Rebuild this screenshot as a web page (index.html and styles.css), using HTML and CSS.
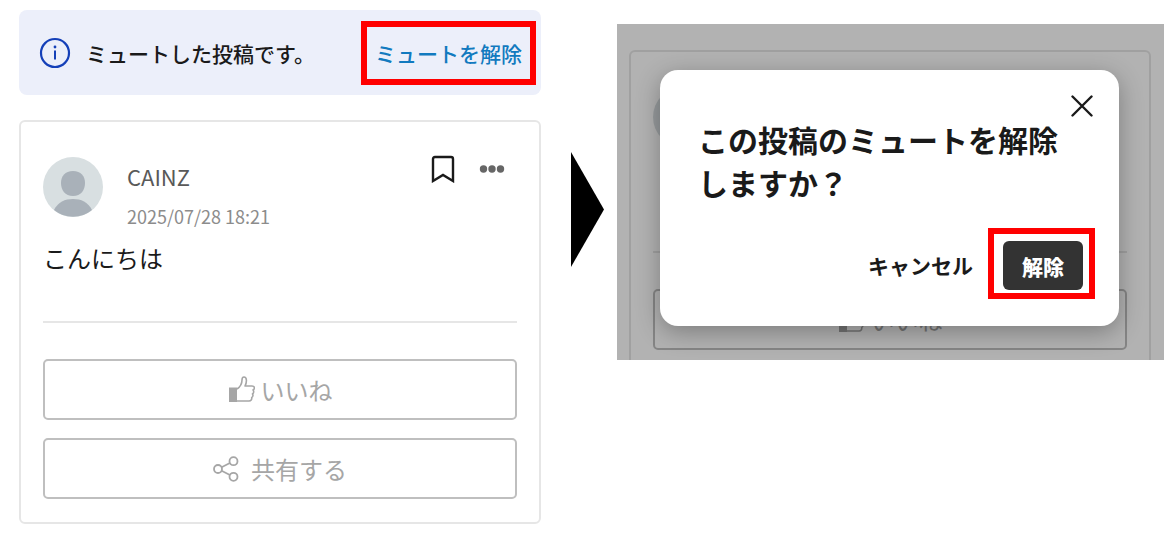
FILE: index.html
```html
<!DOCTYPE html>
<html lang="ja">
<head>
  <meta charset="UTF-8">
  <meta name="viewport" content="width=device-width, initial-scale=1.0">
  <title>ミュートを解除</title>
  <link rel="stylesheet" href="styles.css">
</head>
<body>

  <main class="steps">
    <section class="step-post">
      <div class="notice">
        <svg class="info-icon" viewBox="0 0 32 32" aria-hidden="true">
          <circle cx="16" cy="16" r="14" fill="none" stroke="#1540b8" stroke-width="2.200"/>
          <path d="M16 13.500v9" stroke="#1540b8" stroke-width="2"/>
          <circle cx="16" cy="10" r="1.400" fill="#1540b8"/>
        </svg>
        <p class="notice-text">ミュートした投稿です。</p>
        <div class="highlight">
          <a class="unmute" href="#dialog-title">ミュートを解除</a>
        </div>
      </div>

      <article class="card">
        <header class="card-head">
          <svg class="avatar" viewBox="0 0 60 60" aria-hidden="true">
            <circle cx="30" cy="30" r="30" fill="#d8dfe1"/>
            <path d="M30 14c8 0 12 5 12 12s-4 13-12 13-12-6-12-13 4-12 12-12z" fill="#a9b1b9"/>
            <path d="M11 53c4-8 11-11 19-11s15 3 19 11a30 30 0 0 1-38 0z" fill="#a9b1b9"/>
          </svg>
          <div class="meta">
            <span class="name">CAINZ</span>
            <time class="date" datetime="2025-07-28T18:21">2025/07/28 18:21</time>
          </div>
          <div class="tools">
            <button class="icon-button" type="button" aria-label="ブックマーク">
              <svg width="24" height="28" viewBox="0 0 24 28">
                <path d="M2 26V4q0-2 2-2h16q2 0 2 2v22l-10-6z" fill="none" stroke="#1a1a1a" stroke-width="2.400"/>
              </svg>
            </button>
            <button class="icon-button" type="button" aria-label="メニュー">
              <svg width="26" height="8" viewBox="0 0 26 8">
                <g fill="#666"><circle cx="4.500" cy="4" r="3.700"/><circle cx="13" cy="4" r="3.700"/><circle cx="21.500" cy="4" r="3.700"/></g>
              </svg>
            </button>
          </div>
        </header>
        <p class="body">こんにちは</p>
        <div class="actions">
          <button class="action" type="button">
            <svg width="27" height="27" viewBox="0 0 27 27" aria-hidden="true">
              <path d="M1 11.500h8V26H1z" fill="#a6a6a6"/>
              <path d="M9 13c3-2 5-5 5-9 0-2 .5-3 2-3 3 0 3 5 1 9h7c3 0 3 3 1 4 1 1 1 3-.5 4 .8 1 .5 3-.8 3.500.3 2-.7 3.500-2.700 3.500H9" fill="none" stroke="#a6a6a6" stroke-width="1.600" stroke-linejoin="round"/>
            </svg>
            いいね
          </button>
          <button class="action share" type="button">
            <svg width="26" height="26" viewBox="0 0 26 26" aria-hidden="true">
              <g fill="none" stroke="#a6a6a6" stroke-width="1.800">
                <circle cx="5" cy="13" r="4"/><circle cx="20.500" cy="5.200" r="4"/><circle cx="20.500" cy="20.800" r="4"/>
                <path d="M8.600 11.200l8.300-4.200M8.600 14.800l8.300 4.200"/>
              </g>
            </svg>
            共有する
          </button>
        </div>
      </article>
    </section>

    <svg class="arrow" viewBox="0 0 33 115" aria-hidden="true"><path d="M0 0l33 57.500L0 115z"/></svg>

    <section class="step-dialog">
      <div class="card behind" aria-hidden="true">
        <div class="card-head">
          <svg class="avatar" viewBox="0 0 60 60"><circle cx="30" cy="30" r="30" fill="#d8dfe1"/></svg>
        </div>
        <div class="body"></div>
        <div class="actions">
          <div class="action">
            <svg width="27" height="27" viewBox="0 0 27 27">
              <path d="M1 11.500h8V26H1z" fill="#a6a6a6"/>
              <path d="M9 13c3-2 5-5 5-9 0-2 .5-3 2-3 3 0 3 5 1 9h7c3 0 3 3 1 4 1 1 1 3-.5 4 .8 1 .5 3-.8 3.500.3 2-.7 3.500-2.700 3.500H9" fill="none" stroke="#a6a6a6" stroke-width="1.600"/>
            </svg>
            いいね
          </div>
          <div class="action"></div>
        </div>
      </div>
      <div class="shade"></div>

      <div class="dialog" role="dialog" aria-labelledby="dialog-title">
        <button class="icon-button close" type="button" aria-label="閉じる">
          <svg width="22" height="22" viewBox="0 0 22 22">
            <path d="M1.500 1.500l19 19M20.500 1.500l-19 19" stroke="#1a1a1a" stroke-width="2.400" stroke-linecap="round"/>
          </svg>
        </button>
        <h2 class="dialog-title" id="dialog-title">この投稿のミュートを解除しますか？</h2>
        <div class="dialog-buttons">
          <button class="cancel" type="button">キャンセル</button>
          <div class="highlight">
            <button class="confirm" type="button">解除</button>
          </div>
        </div>
      </div>
    </section>
  </main>

</body>
</html>
```
FILE: styles.css
```css
* {
  box-sizing: border-box;
}

body {
  margin: 0;
  background-color: #fff;
  color: #1a1a1a;
  font-family: "Noto Sans CJK JP", sans-serif;
}

p, h2 {
  margin: 0;
}

svg {
  display: block;
  flex: none;
}

button {
  font-family: inherit;
  cursor: pointer;
}

.steps {
  display: grid;
  grid-template-columns: minmax(0, 522fr) 76px minmax(0, 547fr);
  align-items: start;
  padding: 10px 0 9px 19px;
}

.step-post {
  display: flex;
  flex-direction: column;
  gap: 25px;
}

.notice {
  display: flex;
  align-items: center;
  height: 85px;
  padding: 0 5px 0 20px;
  border-radius: 8px;
  background-color: #eceffa;
}

.info-icon {
  width: 32px;
  height: 32px;
}

.notice-text {
  flex: 1;
  margin-left: 15px;
  font-size: 21px;
  font-weight: 500;
  line-height: 32px;
  white-space: nowrap;
}

.highlight {
  border: 6px solid #f00;
}

.unmute {
  display: block;
  padding: 10px 8px;
  color: #127abf;
  font-size: 21px;
  font-weight: 500;
  line-height: 32px;
  text-decoration: none;
  white-space: nowrap;
}

.card {
  padding: 35px 22px 23px;
  border: 2px solid #e6e6e6;
  border-radius: 6px;
}

.card-head {
  display: flex;
  height: 72px;
}

.avatar {
  width: 60px;
  height: 60px;
}

.meta {
  display: flex;
  flex: 1;
  flex-direction: column;
  gap: 14px;
  padding: 5px 0 0 24px;
}

.name {
  color: #595959;
  font-size: 22px;
  line-height: 28px;
}

.date {
  color: #8c8c8c;
  font-size: 18px;
  line-height: 24px;
}

.tools {
  display: flex;
  align-items: center;
  gap: 24px;
  height: 24px;
  padding-right: 12px;
}

.icon-button {
  padding: 0;
  border: none;
  background: none;
}

.body {
  min-height: 36px;
  margin: 11px 0 45px;
  font-size: 24px;
  line-height: 36px;
}

.actions {
  display: flex;
  flex-direction: column;
  gap: 18px;
  padding-top: 36px;
  border-top: 2px solid #e6e6e6;
}

.action {
  display: flex;
  align-items: center;
  justify-content: center;
  gap: 6px;
  height: 61px;
  padding: 0;
  border: 2px solid #bfbfbf;
  border-radius: 5px;
  background: none;
  color: #a6a6a6;
  font-size: 24px;
  line-height: 36px;
}

.share {
  gap: 12px;
}

.arrow {
  width: 33px;
  margin: 142px 13px 0 30px;
}

.step-dialog {
  position: relative;
  overflow: hidden;
  margin-top: 14px;
  padding: 46px 45px 34px 43px;
}

/* the post, dimmed under the dialog */
.behind {
  position: absolute;
  top: 26px;
  left: 12px;
  right: 13px;
}

.shade {
  position: absolute;
  inset: 0;
  background-color: rgba(0, 0, 0, 0.3);
}

.dialog {
  position: relative;
  display: flex;
  flex-direction: column;
  padding: 25px 24px 27px 38px;
  border-radius: 18px;
  background-color: #fff;
  box-shadow: 0 6px 24px rgba(0, 0, 0, 0.3);
}

.close {
  align-self: flex-end;
  margin-right: 2px;
}

.dialog-title {
  margin-top: 1px;
  padding-right: 20px;
  font-size: 30px;
  font-weight: 700;
  line-height: 43px;
}

.dialog-buttons {
  display: flex;
  align-items: center;
  justify-content: flex-end;
  gap: 15px;
  margin-top: 24px;
}

.dialog-buttons .highlight {
  padding: 7px 6px 3px 9px;
}

.cancel {
  padding: 2px 0 0;
  border: none;
  background: none;
  color: #1a1a1a;
  font-size: 21px;
  font-weight: 700;
  line-height: 32px;
}

.confirm {
  display: block;
  width: 80px;
  height: 49px;
  padding: 0;
  border: none;
  border-radius: 6px;
  background-color: #333;
  color: #fff;
  font-size: 21px;
  font-weight: 900;
}
```
